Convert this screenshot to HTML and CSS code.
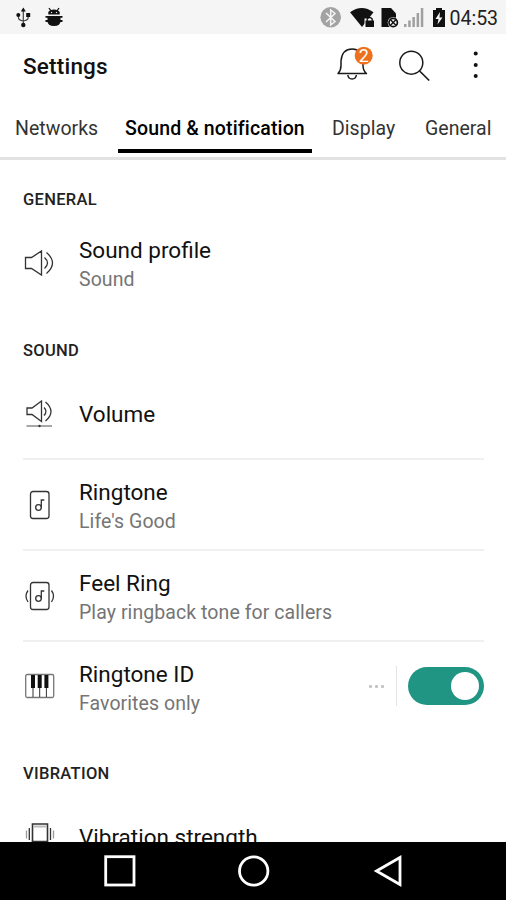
FILE: index.html
```html
<!DOCTYPE html>
<html lang="en">
<head>
<meta charset="utf-8">
<title>Settings</title>
<link rel="stylesheet" href="styles.css">
</head>
<body>
<div class="screen">
  <div class="status">
    <svg class="status-left" width="50" height="24" viewBox="14 5 50 24" fill="none" stroke="#111" stroke-width="1.2">
      <path d="M23.3 9V25M18.5 15v3q0 2 4.8 3q4.8-1 4.8-3v-3" stroke="#444"/>
      <g fill="#111" stroke="none"><path d="M20.8 11.5 23.3 7.5l2.5 4z"/><circle cx="18.3" cy="15" r="2"/><path d="M26.2 13h4v4h-4z"/><circle cx="23.3" cy="25" r="2.2"/></g>
      <path d="M49 8l2 3M59 8l-2 3" stroke-width="1.3"/>
      <path d="M48.3 14.5V12q1.500-2.500 5.700-2.500T59.700 12v2.500zM47.500 16h13v5q0 5-6.500 5t-6.500-5z" fill="#111" stroke="none"/>
      <path d="M45.500 16.800h17M45.500 21h17" stroke-width="1.800"/>
      <circle cx="51.500" cy="12.500" r=".7" fill="#ddd" stroke="none"/><circle cx="56.500" cy="12.500" r=".7" fill="#ddd" stroke="none"/>
    </svg>
    <svg class="status-right" width="128" height="24" viewBox="320 5 128 24">
      <circle cx="330.700" cy="17.300" r="10.300" fill="#a3a3a3"/>
      <path d="M326 13l9 8.500-4.300 3.500V10l4.300 3.500-9 8.500" fill="none" stroke="#f5f5f5" stroke-width="1.500"/>
      <path d="M350 12.200q11.700-8.500 23.500 0L362 27z" fill="#111"/>
      <path d="M364.500 18.500h10V28h-10z" fill="#f5f5f5"/>
      <path d="M365.500 20.500h8.500V27h-8.500z" fill="#111"/><path d="M367.200 21v-2q2.500-3 5 0v2" fill="none" stroke="#111" stroke-width="1.300"/>
      <path d="M381.500 8h9.500l5 5.500V27h-14.500z" fill="#111"/>
      <circle cx="393.200" cy="22.500" r="5.500" fill="#f5f5f5"/><circle cx="393.200" cy="22.500" r="4.200" fill="none" stroke="#111" stroke-width="1.700"/>
      <path d="M390.500 19.800l5.400 5.400m0-5.400l-5.400 5.400" stroke="#111" stroke-width="1.400"/>
      <path d="M404 24h2.500v3H404zM408.200 20.500h2.500V27h-2.500zM412.400 17h2.500v10h-2.500zM416.600 13h2.500v14h-2.500zM420.800 8h2.500v19h-2.500z" fill="#a0a0a0"/>
      <path d="M436 8h6v2h3v17h-12V10h3z" fill="#111"/><path d="M440 12l-4.500 7h3l-1 5.500 5-7h-3z" fill="#f5f5f5"/>
    </svg>
    <span class="clock">04:53</span>
  </div>
  <header class="header">
    <h1 class="title">Settings</h1>
    <svg width="150" height="44" viewBox="334 44 150 44" fill="none" stroke="#1a1a1a" stroke-width="1.500">
      <path d="M338 73.500c2-2 3-5 3-8V61q1-12 11.200-12Q362 49 363 61v4.500c0 3 1 6 3.500 8z" stroke-linejoin="round"/>
      <path d="M347.800 75q.6 4 4.300 4t4.300-4"/>
      <circle cx="363.700" cy="55.700" r="9" fill="#ed701c" stroke="none"/>
      <text class="badge" x="363.700" y="62.200">2</text>
      <circle cx="411.300" cy="62.700" r="11.500"/><path d="M419.600 71l9.600 9.500" stroke-width="1.700"/>
      <g fill="#111" stroke="none"><circle cx="475.700" cy="53.500" r="2"/><circle cx="475.700" cy="65" r="2"/><circle cx="475.700" cy="76" r="2"/></g>
    </svg>
  </header>
  <nav class="tabs">
    <a class="tab networks">Networks</a>
    <a class="tab active">Sound &amp; notification</a>
    <a class="tab display">Display</a>
    <a class="tab general">General</a>
  </nav>
  <main class="content">
    <h2 class="section">GENERAL</h2>
    <div class="row profile">
      <svg class="icon" viewBox="0 0 32 32"><path d="M2.500 10.500h6L18.500 4v24l-10-6.500h-6z"/><path d="M21.500 10.500q6 5.500 0 11M23.500 5.500q12 10.500 0 21"/></svg>
      <div class="text"><div class="name">Sound profile</div><div class="sub">Sound</div></div>
    </div>
    <h2 class="section">SOUND</h2>
    <div class="row line volume">
      <svg class="icon" viewBox="0 0 32 32"><path d="M4 11h5l9.500-7v20.500L9 17.500H4z"/><path d="M21 10.500q4 4 0 8M22.500 5q11 9.500 0 19"/><path d="M3.500 29H29" stroke="#777"/><circle cx="16.500" cy="29" r="1.200" fill="#333" stroke="none"/></svg>
      <div class="text"><div class="name">Volume</div></div>
    </div>
    <div class="row line two">
      <svg class="icon" viewBox="0 0 32 32"><rect x="7.500" y="2.500" width="18.500" height="27" rx="2.500"/><circle cx="15.500" cy="18.500" r="2.800"/><path d="M18.300 18.500v-7.500h3"/></svg>
      <div class="text"><div class="name">Ringtone</div><div class="sub">Life's Good</div></div>
    </div>
    <div class="row line two">
      <svg class="icon" viewBox="0 0 32 32"><rect x="7.500" y="2.500" width="18.500" height="27" rx="2.500"/><circle cx="15.500" cy="18.500" r="2.800"/><path d="M18.300 18.500v-7.500h3M5 10.500q-4 5.500 0 11.500M28.500 10.500q4 5.500 0 11.500"/></svg>
      <div class="text"><div class="name">Feel Ring</div><div class="sub">Play ringback tone for callers</div></div>
    </div>
    <div class="row ringtone-id">
      <svg class="icon" viewBox="0 0 32 32"><rect x="2.700" y="4.500" width="28" height="23" rx="1.500" stroke="#777"/><path d="M10 17v10M16.700 17v10M23.400 17v10" stroke-width="1"/><path d="M8 5h4v13H8zM14.700 5h4v13h-4zM21.400 5h4v13h-4z" fill="#111" stroke="none"/></svg>
      <div class="text"><div class="name">Ringtone ID</div><div class="sub">Favorites only</div></div>
      <div class="more"><i></i><i></i><i></i></div>
      <div class="switch"><div class="knob"></div></div>
    </div>
    <h2 class="section">VIBRATION</h2>
    <div class="row vibration">
      <svg class="icon" viewBox="0 0 32 32"><path d="M9.500 4h15v22h-15z" stroke-width="1.600"/><path d="M10 6.500h14" stroke="#bbb" stroke-width="2"/><path d="M6.300 8v12M27.500 8v12"/><path d="M3.500 10.500v8M30.500 10.500v8" stroke="#999"/><path d="M9.500 21.500h15V26h-15z" fill="#111"/></svg>
      <div class="text"><div class="name">Vibration strength</div></div>
    </div>
  </main>
  <footer class="navbar">
    <svg width="506" height="58" viewBox="0 842 506 58" fill="none" stroke="#fff" stroke-width="2.800">
      <rect x="105.700" y="856.700" width="28.300" height="28.300"/>
      <circle cx="253.700" cy="871" r="14.200"/>
      <path d="M376.500 871L400 857.500v27z"/>
    </svg>
  </footer>
</div>
</body>
</html>
```
FILE: styles.css
```css
* { box-sizing: border-box; }
body { margin: 0; font-family: Roboto, "Liberation Sans", sans-serif; color: #111; background: #fff; }
.screen { width: 506px; height: 900px; display: flex; flex-direction: column; overflow: hidden; }
svg { display: block; flex: none; }
.status { height: 34px; flex: none; display: flex; align-items: center; background: #f5f5f5; padding-left: 14px; }
.status-right { margin-left: 256px; }
.clock { font-size: 19.5px; line-height: 24px; margin-left: 1.5px; margin-top: 3px; white-space: nowrap; color: #222; }
.header { height: 64px; flex: none; display: flex; align-items: center; justify-content: space-between; padding: 0 22px 0 23px; }
.title { margin: 0 0 1px; font-size: 22.5px; line-height: 28px; font-weight: 500; letter-spacing: .2px; }
.badge { font-size: 18px; fill: #fff; stroke: none; text-anchor: middle; }
.tabs { height: 62px; flex: none; display: flex; border-bottom: 3px solid #e2e2e2; padding-left: 15px; }
.tab { height: 55px; font-size: 19.5px; line-height: 24px; padding-top: 19px; white-space: nowrap; color: #333; letter-spacing: .03px; }
.tab.networks { width: 103px; }
.tab.active { width: 194px; padding-left: 7px; border-bottom: 4px solid #000; font-weight: 500; color: #000; letter-spacing: .14px; }
.tab.display { margin-left: 20px; width: 93px; }
.content { flex: 1; min-height: 0; padding: 28px 22px 0 23px; overflow: hidden; }
.section { margin: 0 0 7px; font-size: 16.5px; line-height: 24px; font-weight: 500; color: #222; letter-spacing: .3px; }
.row + .section { margin-top: 29px; }
.row { height: 91px; display: flex; align-items: center; }
.row.line { border-bottom: 2px solid #f0f0f0; }
.icon { width: 32px; height: 32px; margin-right: 24px; fill: none; stroke: #333; stroke-width: 1.3; }
.text { flex: 1; white-space: nowrap; padding-top: 2px; }
.name { font-size: 22.5px; line-height: 26px; margin-bottom: 3px; }
.sub { font-size: 19.5px; line-height: 28px; color: #757575; letter-spacing: .07px; }
.profile .icon { margin-bottom: 4px; }
.row.volume { height: 90px; }
.volume .icon { margin-bottom: 3px; }
.volume .text { padding-top: 3px; }
.two .text { padding-top: 6px; }
.row.ringtone-id { height: 88px; }
.ringtone-id .text { padding-top: 7px; }
.row.ringtone-id + .section { margin-top: 32px; }
.row.vibration { height: 89px; }
.vibration .icon { margin-bottom: 4px; }
.more { display: flex; gap: 3px; padding-right: 12px; height: 40px; align-items: center; border-right: 1px solid #e4e4e4; }
.more i { width: 3px; height: 3px; background: #c4c4c4; border-radius: 1px; }
.switch { width: 76px; height: 38px; margin-left: 11px; border-radius: 19px; background: #219583; display: flex; align-items: center; justify-content: flex-end; padding-right: 5px; }
.knob { width: 28px; height: 28px; border-radius: 50%; background: #fff; }
.navbar { height: 58px; flex: none; background: #000; }
```
